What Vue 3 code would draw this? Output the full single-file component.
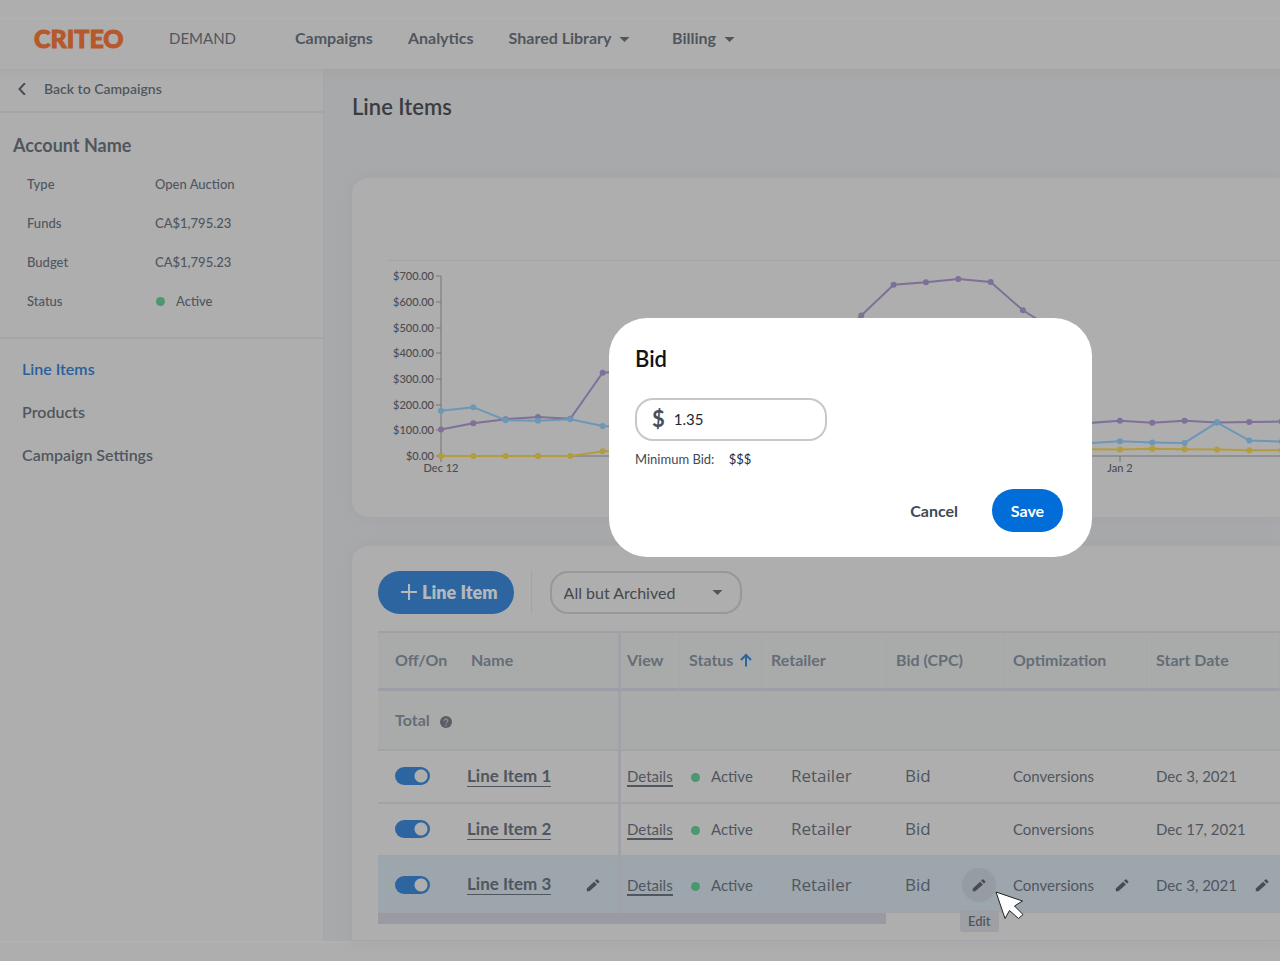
<script setup>
import { ref } from 'vue'

const facts = [
  { label: 'Type', value: 'Open Auction' },
  { label: 'Funds', value: 'CA$1,795.23' },
  { label: 'Budget', value: 'CA$1,795.23' },
  { label: 'Status', value: 'Active', dot: true }
]

const rows = ref([
  { id: 1, name: 'Line Item 1', start: 'Dec 3, 2021', on: true },
  { id: 2, name: 'Line Item 2', start: 'Dec 17, 2021', on: true },
  { id: 3, name: 'Line Item 3', start: 'Dec 3, 2021', on: true, hover: true }
])

const bid = ref('1.35')
const filter = ref('All but Archived')

// Chart geometry
const originX = 89
const stepX = 32.33
const baseY = 195
const tickGap = 25.7
const ticks = [0, 1, 2, 3, 4, 5, 6, 7].map((n) => ({
  label: n ? `$${n}00.00` : '$0.00',
  y: Math.round(baseY - n * tickGap)
}))

const toPoints = (values) =>
  values.map((v, i) => ({ x: originX + i * stepX, y: baseY - (v / 100) * tickGap }))

const series = [
  { name: 'purple', values: [103, 127, 143, 152, 145, 324, 332, 340, 352, 360, 372, 390, 440, 547, 666, 676, 689, 677, 567, 488, 128, 137, 129, 137, 130, 132, 134, 134] },
  { name: 'yellow', values: [0, 0, 0, 0, 0, 18, 22, 25, 25, 25, 25, 25, 25, 25, 25, 25, 25, 25, 25, 25, 26, 25, 28, 26, 25, 22, 22, 22] },
  { name: 'blue', values: [176, 190, 139, 137, 143, 117, 110, 100, 95, 90, 85, 80, 76, 72, 70, 66, 62, 60, 56, 54, 50, 57, 53, 51, 131, 60, 56, 56] }
].map((s) => ({ ...s, points: toPoints(s.values) }))

const line = (points) => points.map((p) => `${p.x},${p.y}`).join(' ')
const pencil = 'M.8 10.600V13.200h2.600l7.600-6.600-2.900-2.900zM13.200 4.400a.9.9 0 0 0 0-1.200l-1.700-1.700a.9.9 0 0 0-1.200 0L9 2.700 11.900 5.600z'
</script>

<template>
  <div class="app">
    <div class="strip"></div>

    <header class="topbar">
      <a class="logo" href="#">CRITEO</a>
      <span class="product">DEMAND</span>
      <nav class="nav">
        <a href="#">Campaigns</a>
        <a href="#">Analytics</a>
        <a href="#">Shared Library <svg class="caret" viewBox="0 0 10 5" aria-hidden="true"><path d="M0 0h10L5 5z" /></svg></a>
        <a href="#" class="wide">Billing <svg class="caret" viewBox="0 0 10 5" aria-hidden="true"><path d="M0 0h10L5 5z" /></svg></a>
      </nav>
    </header>

    <div class="body">
      <aside class="sidebar">
        <a class="back" href="#">
          <svg viewBox="0 0 8 12" aria-hidden="true"><path d="M7 0 1.500 6 7 12" /></svg>
          Back to Campaigns
        </a>
        <section class="account">
          <h2>Account Name</h2>
          <dl>
            <div v-for="f in facts" :key="f.label">
              <dt>{{ f.label }}</dt>
              <dd><i v-if="f.dot" class="dot"></i>{{ f.value }}</dd>
            </div>
          </dl>
        </section>
        <nav class="side-nav">
          <a href="#" class="current">Line Items</a>
          <a href="#">Products</a>
          <a href="#">Campaign Settings</a>
        </nav>
      </aside>

      <main class="main">
        <h1>Line Items</h1>

        <section class="card chart-card">
          <div class="rule"></div>
          <svg class="chart" role="img" aria-label="Spend by day">
            <g class="axis">
              <path d="M89 15V201M89 195H2000M768 195V201" />
              <path v-for="t in ticks" :key="t.label" :d="`M84 ${t.y}h5`" />
            </g>
            <g v-for="s in series" :key="s.name" :class="s.name">
              <polyline :points="line(s.points)" />
              <circle v-for="p in s.points" :key="p.x" :cx="p.x" :cy="p.y" r="3" />
            </g>
            <g class="labels">
              <text v-for="t in ticks" :key="t.label" x="82" :y="t.y + 4" text-anchor="end">{{ t.label }}</text>
              <text x="89" y="211" text-anchor="middle">Dec 12</text>
              <text x="768" y="211" text-anchor="middle">Jan 2</text>
            </g>
          </svg>
        </section>

        <section class="card table-card">
          <div class="tools">
            <button type="button" class="add">
              <svg viewBox="0 0 16 16" aria-hidden="true"><path d="M8 0v16M0 8h16" /></svg>Line Item
            </button>
            <div class="filter">
              <select v-model="filter" aria-label="Filter line items">
                <option>All but Archived</option>
                <option>Archived</option>
              </select>
              <svg class="caret" viewBox="0 0 10 5" aria-hidden="true"><path d="M0 0h10L5 5z" /></svg>
            </div>
          </div>

          <table>
            <colgroup>
              <col class="c-toggle" /><col class="c-name" /><col class="c-view" /><col class="c-status" />
              <col class="c-retailer" /><col class="c-bid" /><col class="c-opt" /><col />
            </colgroup>
            <thead>
              <tr>
                <th scope="col" class="first">Off/On</th>
                <th scope="col" class="name split">Name</th>
                <th scope="col" class="tight">View</th>
                <th scope="col">Status
                  <svg class="sort" viewBox="0 0 12 14" aria-hidden="true"><path d="M6 13.500V2M1 7l5-5 5 5" /></svg>
                </th>
                <th scope="col">Retailer</th>
                <th scope="col">Bid (CPC)</th>
                <th scope="col">Optimization</th>
                <th scope="col">Start Date</th>
              </tr>
            </thead>
            <tbody>
              <tr class="total">
                <th scope="row" colspan="2" class="first split">Total
                  <svg class="help" viewBox="0 0 12 12" aria-hidden="true"><circle cx="6" cy="6" r="6" /><path d="M4.200 4.700a1.800 1.800 0 1 1 2.700 1.600Q6 6.800 6 7.600M6 8.800v1.200" /></svg>
                </th>
                <td colspan="6"></td>
              </tr>
              <tr v-for="r in rows" :key="r.id" :class="{ hover: r.hover }">
                <td class="first"><input v-model="r.on" class="toggle" type="checkbox" :aria-label="`${r.name} on`" /></td>
                <td class="name split">
                  <div class="pair">
                    <a href="#" class="item">{{ r.name }}</a>
                    <button v-if="r.hover" type="button" class="edit" aria-label="Edit name"><svg viewBox="0 0 14 14"><path :d="pencil" /></svg></button>
                  </div>
                </td>
                <td class="tight"><a href="#" class="details">Details</a></td>
                <td class="status"><i class="dot"></i>Active</td>
                <td class="retailer">Retailer</td>
                <td class="bid">
                  <div class="pair">
                    <span>Bid</span>
                    <span v-if="r.hover" class="hot">
                      <button type="button" class="edit round" aria-label="Edit bid"><svg viewBox="0 0 14 14"><path :d="pencil" /></svg></button>
                      <span class="tip" role="tooltip">Edit</span>
                      <svg class="pointer" viewBox="0 0 29 29" aria-hidden="true"><path d="M1 1 10 27.500 14.500 19.500 23.500 27.500 28 23.500 19.500 15 27.500 10z" /></svg>
                    </span>
                  </div>
                </td>
                <td>
                  <div class="pair">
                    <span>Conversions</span>
                    <button v-if="r.hover" type="button" class="edit" aria-label="Edit optimization"><svg viewBox="0 0 14 14"><path :d="pencil" /></svg></button>
                  </div>
                </td>
                <td>
                  <div class="pair date">
                    <span>{{ r.start }}</span>
                    <button v-if="r.hover" type="button" class="edit" aria-label="Edit start date"><svg viewBox="0 0 14 14"><path :d="pencil" /></svg></button>
                  </div>
                </td>
              </tr>
            </tbody>
          </table>
          <div class="scroll"></div>
        </section>

        <form class="dialog" role="dialog" aria-labelledby="bid-title" @submit.prevent>
          <h2 id="bid-title"><label for="bid-value">Bid</label></h2>
          <div class="field"><span>$</span><input id="bid-value" v-model="bid" type="text" /></div>
          <p class="minimum">Minimum Bid: <b>$$$</b></p>
          <div class="actions">
            <button type="button" class="cancel">Cancel</button>
            <button type="submit" class="save">Save</button>
          </div>
        </form>
      </main>
    </div>
    <footer class="bottom"></footer>
  </div>
</template>

<style>
body {
  background: #aeaeae;
}
</style>

<style scoped>
* {
  box-sizing: border-box;
}

.app {
  display: flex;
  flex-direction: column;
  min-height: 100vh;
  overflow: hidden;
  background: #aeaeae;
  color: #50565e;
  font: 400 16px/20px Lato, "Open Sans", sans-serif;
}

a {
  color: inherit;
  text-decoration: none;
}

button,
input,
select {
  font: inherit;
  color: inherit;
  border: 0;
  background: none;
  margin: 0;
  padding: 0;
}

h1,
h2,
p,
dl,
dd {
  margin: 0;
}

.strip {
  height: 19px;
  border-bottom: 1px solid #b2b2b2;
}

.topbar {
  display: flex;
  align-items: center;
  height: 50px;
  padding: 0 34px 12px;
}

.logo {
  width: 135px;
  color: #b5592d;
  font-size: 25px;
  font-weight: 900;
  -webkit-text-stroke: 1px #b5592d;
}

.product {
  width: 126px;
  font-size: 15px;
}

.nav {
  display: flex;
  gap: 35px;
  font-weight: 700;
}

.caret {
  width: 11px;
  height: 5px;
  margin-left: 4px;
  vertical-align: 2px;
  fill: #50565e;
}

.nav .wide {
  margin-left: 7px;
}

.body {
  display: grid;
  grid-template-columns: 324px minmax(0, 1fr);
  flex: 1;
}

.sidebar {
  border-right: 1px solid #a5a6aa;
  background: linear-gradient(#a9a9a9, #aeaeae 12px);
}

.back {
  display: flex;
  align-items: center;
  gap: 18px;
  height: 44px;
  padding: 0 18px 2px;
  border-bottom: 2px solid #a5a5ab;
  font-size: 14px;
  font-weight: 600;
}

.back svg {
  width: 8px;
  height: 12px;
  fill: none;
  stroke: #484e56;
  stroke-width: 2;
}

.account {
  padding: 20px 13px 17px;
  border-bottom: 2px solid #a5a5ab;
}

.account h2 {
  font-size: 18px;
  line-height: 24px;
}

.account dl {
  padding: 7px 14px 0;
  font-size: 13px;
  font-weight: 500;
}

.account dl div {
  display: grid;
  grid-template-columns: 128px 1fr;
  align-items: center;
  height: 39px;
}

.dot {
  display: inline-block;
  width: 9px;
  height: 9px;
  margin: 0 11px 0 1px;
  border-radius: 50%;
  background: #4c9770;
}

.side-nav {
  display: flex;
  flex-direction: column;
  gap: 23px;
  padding: 20px 22px;
  font-weight: 600;
}

.side-nav .current {
  color: #29609c;
}

.main {
  position: relative;
  padding-left: 28px;
  background: linear-gradient(#a5a5a6, #a8a9ab 12px);
}

h1 {
  padding: 23px 0 57px;
  color: #3a3c40;
  font-size: 22px;
  font-weight: 600;
  line-height: 29px;
}

.card {
  border-radius: 16px 0 0 16px;
  background: #aeaeae;
  box-shadow: 0 0 12px 2px #a3a4aa;
}

.chart-card {
  height: 339px;
  padding-top: 82px;
}

.rule {
  margin-left: 36px;
  border-top: 1px solid #a3a4a9;
}

.chart {
  display: block;
  width: 100%;
  height: 220px;
}

.axis path {
  fill: none;
  stroke: #737475;
  stroke-width: 1;
}

.labels text {
  fill: #4b4d50;
  font-size: 11px;
  font-weight: 500;
}

polyline {
  fill: none;
  stroke-width: 2;
}

.purple {
  fill: #7f7099;
  stroke: #7f7099;
}

.blue {
  fill: #6c97b7;
  stroke: #6c97b7;
}

.yellow {
  fill: #b39c3d;
  stroke: #b39c3d;
}

circle {
  stroke: none;
}

.table-card {
  margin-top: 29px;
  padding: 25px 0 16px 26px;
  border-radius: 16px 0 0 0;
}

.tools {
  display: flex;
  height: 43px;
  margin-bottom: 17px;
}

.add {
  display: flex;
  align-items: center;
  gap: 5px;
  margin-right: 17px;
  padding: 0 16px 2px 23px;
  border-radius: 22px;
  background: #2c659f;
  color: #b4b8bc;
  font-size: 18px;
  font-weight: 800;
}

.add svg {
  width: 16px;
  height: 16px;
  fill: none;
  stroke: #b4b8bc;
  stroke-width: 2;
}

.filter {
  display: grid;
  align-items: center;
  width: 211px;
  padding-left: 18px;
  border-left: 1px solid #a3a4a7;
}

.filter select,
.filter .caret {
  grid-area: 1 / 1;
}

.filter select {
  width: 100%;
  height: 43px;
  padding: 0 12px;
  border: 2px solid #97989a;
  border-radius: 18px;
  color: #45484c;
  appearance: none;
}

.filter .caret {
  justify-self: end;
  margin-right: 19px;
  pointer-events: none;
}

table {
  width: 100%;
  table-layout: fixed;
  border-collapse: separate;
  border-spacing: 0;
}

.c-toggle {
  width: 89px;
}

.c-name {
  width: 154px;
}

.c-view {
  width: 59px;
}

.c-status {
  width: 82px;
}

.c-retailer {
  width: 125px;
}

.c-bid {
  width: 117px;
}

.c-opt {
  width: 143px;
}

th,
td {
  height: 53px;
  padding: 0 0 2px 9px;
  border-bottom: 2px solid #a2a3a9;
  font-size: 15px;
  text-align: left;
  white-space: nowrap;
}

th {
  background: #a9abaa;
  color: #656d77;
  font-size: 16px;
}

thead th {
  height: 60px;
  border-top: 2px solid #9fa1a7;
  border-bottom: 3px solid #9b9ea6;
  border-right: 1px solid #a6a8a8;
}

thead th.first {
  border-right: 0;
}

.total th,
.total td {
  height: 60px;
  padding-bottom: 0;
  background: #a9abaa;
}

.first {
  padding-left: 17px;
}

thead .name {
  padding-left: 4px;
}

td.name {
  padding-bottom: 0;
  padding-left: 0;
}

th.split,
td.split {
  border-right: 3px solid #a0a2a7;
}

.tight {
  padding-left: 6px;
}

.sort {
  width: 12px;
  height: 14px;
  margin-left: 3px;
  vertical-align: -1px;
  fill: none;
  stroke: #2c659f;
  stroke-width: 2;
}

.help {
  width: 12px;
  height: 12px;
  margin-left: 6px;
  vertical-align: -2px;
  fill: #585e66;
}

.help path {
  fill: none;
  stroke: #a9abaa;
  stroke-width: 1;
}

tbody .hover td {
  height: 56px;
  padding-bottom: 0;
  border-bottom-width: 1px;
  background: #9da5ad;
}

.toggle {
  display: block;
  width: 35px;
  height: 18px;
  border-radius: 9px;
  background: radial-gradient(circle at 26px 9px, #aeaeae 6px, #2c659f 7px);
  appearance: none;
}

.toggle:not(:checked) {
  background: radial-gradient(circle at 9px 9px, #aeaeae 6px, #80868c 7px);
}

.pair {
  display: flex;
  align-items: center;
  justify-content: space-between;
  padding-right: 18px;
}

.date {
  justify-content: flex-start;
  gap: 18px;
}

.item {
  border-bottom: 1px solid;
  font-size: 17px;
  font-weight: 700;
}

.details {
  border-bottom: 2px solid;
}

.status .dot {
  margin-left: 2px;
}

td.retailer,
td.bid {
  font-family: "Open Sans", sans-serif;
  font-size: 17px;
}

td.retailer {
  padding-left: 29px;
}

td.bid {
  padding-left: 18px;
}

.bid .pair {
  padding-right: 8px;
}

.edit {
  display: grid;
  place-items: center;
  width: 14px;
  height: 14px;
}

.edit svg {
  width: 14px;
  height: 14px;
  fill: #484d54;
}

.hot {
  position: relative;
}

.edit.round {
  width: 34px;
  height: 34px;
  border-radius: 50%;
  background: #959ca4;
}

.tip {
  position: absolute;
  top: 42px;
  left: -2px;
  padding: 1px 8px;
  border-radius: 3px;
  background: #9fa0a6;
  font-family: Lato, sans-serif;
  font-size: 13px;
  font-weight: 600;
}

.pointer {
  position: absolute;
  z-index: 1;
  top: 23px;
  left: 33px;
  width: 29px;
  height: 29px;
  fill: #fff;
  stroke: #222;
}

.scroll {
  width: 508px;
  max-width: 100%;
  height: 11px;
  background: #9a9ba2;
}

.bottom {
  height: 20px;
  border-top: 2px solid #b2b2b2;
}

.dialog {
  position: absolute;
  top: 249px;
  left: 285px;
  width: 483px;
  padding: 26px 29px 25px 26px;
  border-radius: 38px;
  background: #fff;
  color: #3f4a55;
}

.dialog h2 {
  color: #101418;
  font-size: 22px;
  font-weight: 600;
  line-height: 30px;
}

.field {
  display: flex;
  align-items: center;
  gap: 9px;
  width: 192px;
  height: 43px;
  margin: 24px 0 8px;
  padding: 0 15px 2px;
  border: 2px solid #c6c8ca;
  border-radius: 18px;
}

.field span {
  color: #44505b;
  font-size: 22px;
  font-weight: 700;
}

.field input {
  width: 100%;
  min-width: 0;
  color: #1d2833;
  font-size: 15px;
}

.minimum {
  font-size: 13px;
}

.minimum b {
  margin-left: 11px;
  color: #1d2c3c;
  font-size: 13px;
  font-weight: 400;
}

.actions {
  display: flex;
  justify-content: flex-end;
  align-items: center;
  gap: 34px;
  margin-top: 20px;
  font-weight: 700;
}

.save {
  width: 71px;
  height: 43px;
  border-radius: 22px;
  background: #006dd9;
  color: #fff;
}
</style>
